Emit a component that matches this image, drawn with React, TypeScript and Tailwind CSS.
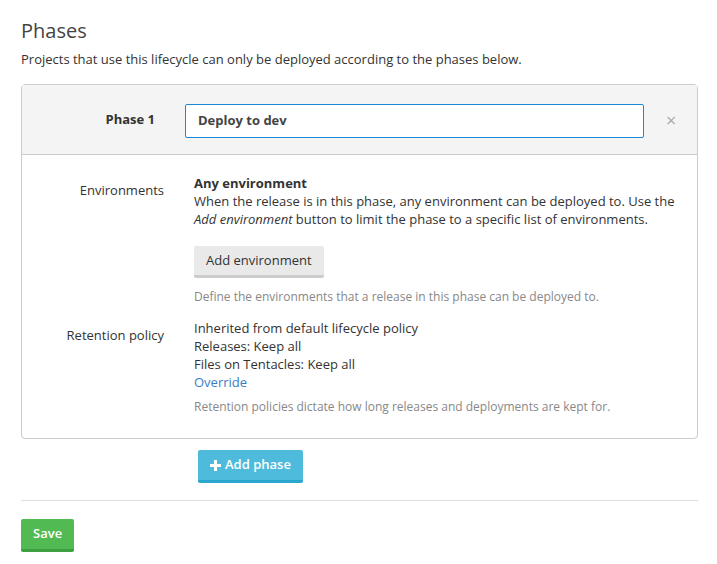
import React from "react";

const font = { fontFamily: '"Open Sans", "Noto Sans", sans-serif' };

const Row = ({ label, children }: { label: string; children: React.ReactNode }) => (
  <div className="flex">
    <div className="w-[142px] shrink-0 pt-[7px] text-right text-[13px] text-[#333]">{label}</div>
    <div className="ml-[30px] flex-1">{children}</div>
  </div>
);

export default function App() {
  return (
    <div className="min-h-[564px] bg-white px-[21px] pt-[18px] text-[#333]" style={font}>
      <h2 className="text-[20px] leading-[26px] font-normal text-[#444]">Phases</h2>
      <p className="mt-[6px] text-[13px] leading-[18px]">
        Projects that use this lifecycle can only be deployed according to the phases below.
      </p>

      <div className="mt-[16px] w-[677px] rounded-[4px] border border-[#ccc]">
        <div className="flex h-[70px] items-center border-b border-[#ccc] bg-[#f4f4f4]">
          <div className="w-[133px] text-right text-[13px] font-bold">Phase 1</div>
          <div className="mt-[2px] ml-[30px] flex h-[34px] w-[459px] items-center rounded-[2px] border border-[#1e88d8] bg-white px-[12px] text-[13px] font-bold text-[#444]">
            Deploy to dev
          </div>
          <div className="ml-[22px] text-[18px] leading-none text-[#aaa]">×</div>
        </div>

        <div className="flex flex-col gap-[14px] pt-[19px] pb-[23px]">
          <Row label="Environments">
            <div className="text-[13px] leading-[18px]">
              <div className="font-bold">Any environment</div>
              <div>
                When the release is in this phase, any environment can be deployed to. Use the{" "}
                <em>Add environment</em> button to limit the phase to a specific list of environments.
              </div>
            </div>
            <button className="mt-[18px] h-[32px] rounded-[2px] border-b-[3px] border-[#ccc] bg-[#e9e9e9] px-[12px] text-[13px] text-[#333]">
              Add environment
            </button>
            <div className="mt-[11px] text-[12px] leading-[16px] text-[#888]">
              Define the environments that a release in this phase can be deployed to.
            </div>
          </Row>
          <Row label="Retention policy">
            <div className="text-[13px] leading-[18px]">
              <div>Inherited from default lifecycle policy</div>
              <div>Releases: Keep all</div>
              <div>Files on Tentacles: Keep all</div>
              <div className="text-[#3b7dc4]">Override</div>
            </div>
            <div className="mt-[8px] text-[12px] leading-[16px] text-[#888]">
              Retention policies dictate how long releases and deployments are kept for.
            </div>
          </Row>
        </div>
      </div>

      <button className="mt-[11px] ml-[177px] flex h-[33px] items-center gap-[4px] rounded-[2px] border-b-[3px] border-[#2aa6cf] bg-[#4fbbdc] px-[12px] text-[13px] font-semibold text-white">
        <svg width="11" height="11" viewBox="0 0 11 11">
          <path d="M4 0h3v4h4v3H7v4H4V7H0V4h4z" fill="white" />
        </svg>
        Add phase
      </button>

      <div className="mt-[17px] h-px w-[677px] bg-[#ddd]" />

      <button className="mt-[18px] h-[33px] rounded-[2px] border-b-[3px] border-[#3e9e40] bg-[#52ba52] px-[12px] text-[13px] font-semibold text-white">
        Save
      </button>
    </div>
  );
}
